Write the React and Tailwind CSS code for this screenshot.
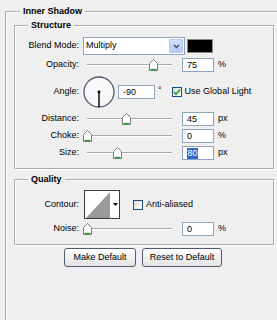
import React from "react";

const Thumb = ({ c }) => (
  <svg
    className="absolute top-[1px]"
    style={{ left: c - 4.5 }}
    width="9"
    height="12"
    viewBox="0 0 9 12"
  >
    <path d="M0.5 11.5V4.5L4.5 0.5L8.5 4.5V11.5Z" fill="#fff" stroke="#7d7d7d" />
    <path d="M1.5 10.6H7.5" stroke="#2e9b3a" strokeWidth="1.6" />
  </svg>
);

const Slider = ({ c }) => (
  <div className="relative ml-[8px] flex h-[14px] w-[85px] items-center">
    <div className="h-[2px] w-full border-t border-[#a9a9a9] bg-white" />
    <Thumb c={c} />
  </div>
);

const Field = ({ children, wide }) => (
  <div
    className={
      (wide ? "w-[37px] " : "w-[32px] ") +
      "flex h-[14px] items-center border border-[#8fa5bd] bg-white pl-[4px] text-[9px] leading-[12px]"
    }
  >
    {children}
  </div>
);

const Label = ({ children }) => <div className="w-[63px] text-right">{children}</div>;

const SliderRow = ({ label, c, value, unit, sel }) => (
  <div className="flex h-[14px] items-center">
    <Label>{label}</Label>
    <Slider c={c} />
    <div className="ml-[10px]">
      <Field>
        {sel ? (
          <span className="bg-[#316ac5] px-[0.5px] leading-[11px] text-white">{value}</span>
        ) : (
          value
        )}
      </Field>
    </div>
    <div className="ml-[4px]">{unit}</div>
  </div>
);

const Check = () => (
  <div className="flex h-[10px] w-[10px] items-center justify-center border border-[#1c4f7f] bg-linear-to-br from-[#dcdcd6] to-white">
    <svg width="8" height="8" viewBox="0 0 8 8">
      <path d="M1 4 L3 6.2 L7 1.5" fill="none" stroke="#21a121" strokeWidth="1.7" />
    </svg>
  </div>
);

const EmptyCheck = () => (
  <div className="h-[10px] w-[10px] border border-[#1c4f7f] bg-linear-to-br from-[#dcdcd6] to-white" />
);

const groove = "border-2 border-white [border-style:groove]";
const legend = "px-[3px] pb-[2px] text-[9px] font-bold leading-[12px]";

export default function App() {
  return (
    <div className="h-[320px] w-[277px] overflow-hidden bg-[#efefef] font-['Liberation_Sans',Arial,sans-serif] text-[9px] text-black">
      <fieldset className={groove + " ml-[5px] mt-[5px] h-[340px] w-[300px]"}>
        <legend className={legend + " ml-[13px]"}>Inner Shadow</legend>

        <fieldset className={groove + " ml-[7px] w-[261px]"}>
          <legend className={legend + " ml-[12px]"}>Structure</legend>
          <div className="flex flex-col pb-[8px] pt-[4px]">
            <div className="flex h-[18px] items-center">
              <Label>Blend Mode:</Label>
              <div className="ml-[4px] flex h-[18px] w-[102px] items-center border border-[#8fa5bd] bg-white">
                <div className="flex-1 pl-[2px] text-[9px]">Multiply</div>
                <div className="mr-[1px] flex h-[14px] w-[14px] items-center justify-center rounded-[1px] border border-[#b5c6ee] bg-linear-to-b from-[#d4def9] to-[#b6c8f3]">
                  <svg width="7" height="5" viewBox="0 0 7 5">
                    <path d="M1 1 L3.5 3.5 L6 1" fill="none" stroke="#3a4d80" strokeWidth="1.5" />
                  </svg>
                </div>
              </div>
              <div className="ml-[2px] h-[14px] w-[26px] border border-[#8a8a8a] bg-black" />
            </div>

            <div className="mt-[3px]">
              <SliderRow label="Opacity:" c={66} value="75" unit="%" />
            </div>

            <div className="mt-[4px] flex h-[32px] items-center">
              <Label>Angle:</Label>
              <svg className="ml-[4px]" width="32" height="32" viewBox="0 0 32 32">
                <circle cx="16" cy="16" r="15" fill="#f8f8f8" stroke="#4d5872" strokeWidth="1.3" />
                <line x1="16" y1="16" x2="16" y2="31" stroke="#000" strokeWidth="1.4" />
                <circle cx="16" cy="16" r="1.4" fill="#000" />
              </svg>
              <div className="ml-[3px]">
                <Field wide>-90</Field>
              </div>
              <div className="ml-[3px] self-start pt-[8px]">°</div>
              <div className="ml-[10px]">
                <Check />
              </div>
              <div className="ml-[3px]">Use Global Light</div>
            </div>

            <div className="mt-[4px] flex flex-col gap-[3px]">
              <SliderRow label="Distance:" c={39} value="45" unit="px" />
              <SliderRow label="Choke:" c={0} value="0" unit="%" />
              <SliderRow label="Size:" c={30} value="80" unit="px" sel />
            </div>
          </div>
        </fieldset>

        <fieldset className={groove + " ml-[7px] mt-[3px] w-[261px]"}>
          <legend className={legend + " ml-[12px]"}>Quality</legend>
          <div className="flex flex-col pb-[8px] pt-[3px]">
            <div className="flex h-[29px] items-center">
              <Label>Contour:</Label>
              <div className="ml-[5px] flex h-[29px] w-[36px] border border-[#3c3c3c] bg-white">
                <svg width="26" height="27" viewBox="0 0 26 27">
                  <path d="M1 27 L25 1 V27 Z" fill="#9a9a9a" />
                </svg>
                <div className="flex flex-1 items-center justify-center">
                  <svg width="5" height="3" viewBox="0 0 5 3">
                    <path d="M0 0 H5 L2.5 3 Z" fill="#000" />
                  </svg>
                </div>
              </div>
              <div className="ml-[13px]">
                <EmptyCheck />
              </div>
              <div className="ml-[3px]">Anti-aliased</div>
            </div>
            <div className="mt-[3px]">
              <SliderRow label="Noise:" c={0} value="0" unit="%" />
            </div>
          </div>
        </fieldset>

        <div className="ml-[7px] mt-[2px] flex w-[261px] gap-[6px] pl-[50px]">
          <button className="h-[19px] w-[72px] rounded-[3px] border border-[#4f5b6b] bg-linear-to-b from-white to-[#e2e2e2] text-[9px] text-black">
            Make Default
          </button>
          <button className="h-[19px] w-[80px] rounded-[3px] border border-[#4f5b6b] bg-linear-to-b from-white to-[#e2e2e2] text-[9px] text-black">
            Reset to Default
          </button>
        </div>
      </fieldset>
    </div>
  );
}
